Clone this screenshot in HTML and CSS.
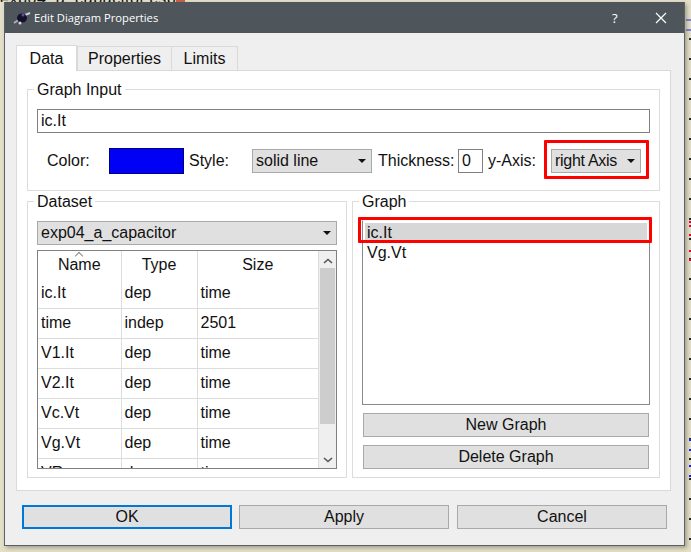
FILE: index.html
```html
<!DOCTYPE html>
<html lang="en">
<head>
	<meta charset="UTF-8">
	<title>Edit Diagram Properties</title>
	<link rel="stylesheet" href="styles.css">
</head>
<body>
	<div class="behind-title">exp04_a_capacitor.csp</div>
	<div class="behind-icon"></div>
	<svg class="behind-marks" width="6" height="552" viewBox="0 0 6 552">
		<path d="M1 20h5M1 30h5" stroke="#1f1fe0" fill="none"/>
		<path d="M4 222h2M4 226h2M4 235h2M4 251h2M4 260h2" stroke="#e8003c" stroke-width="2" fill="none"/>
		<path d="M4 440h2M4 450h2M4 466h2M4 476h2" stroke="#1f1fe0" stroke-width="2" fill="none"/>
	</svg>

	<div class="window">
		<div class="titlebar">
			<svg class="app-icon" width="18" height="18" viewBox="0 0 18 18">
				<path d="M1 14L7 10" stroke="#aab0b8" stroke-width="2"/>
				<path d="M12 6L17 4" stroke="#c8ccd0" stroke-width="2"/>
				<ellipse cx="9" cy="9" rx="5" ry="4.5" fill="#15102e"/>
				<circle cx="10" cy="6" r="1.5" fill="#6a4a9a"/>
				<circle cx="7" cy="14" r="1.5" fill="#d8d8e0"/>
			</svg>
			<span class="title">Edit Diagram Properties</span>
			<span class="help">?</span>
			<svg class="close" width="12" height="12" viewBox="0 0 12 12">
				<path d="M1 1L11 11M11 1L1 11" stroke="#fff" stroke-width="1.2" fill="none"/>
			</svg>
		</div>

		<div class="content">
			<div class="tabs">
				<div class="tab tab-active">Data</div>
				<div class="tab tab-props">Properties</div>
				<div class="tab tab-limits">Limits</div>
			</div>

			<div class="pane">
				<fieldset class="group group-input">
					<legend>Graph Input</legend>
					<div class="field">ic.It</div>
					<div class="style-row">
						<span class="lbl-color">Color:</span>
						<span class="swatch"></span>
						<span class="lbl-style">Style:</span>
						<div class="combo combo-style">solid line<i class="arrow"></i></div>
						<span class="lbl-thick">Thickness:</span>
						<div class="spin">0</div>
						<span class="lbl-axis">y-Axis:</span>
						<div class="combo combo-axis">right Axis<i class="arrow"></i></div>
					</div>
				</fieldset>

				<div class="columns">
					<fieldset class="group group-dataset">
						<legend>Dataset</legend>
						<div class="combo combo-dataset">exp04_a_capacitor<i class="arrow"></i></div>
						<div class="table-box">
							<div class="table-clip">
								<table>
									<thead>
										<tr><th class="col-name">Name</th><th class="col-type">Type</th><th>Size</th></tr>
									</thead>
									<tbody>
										<tr><td>ic.It</td><td>dep</td><td>time</td></tr>
										<tr><td>time</td><td>indep</td><td>2501</td></tr>
										<tr><td>V1.It</td><td>dep</td><td>time</td></tr>
										<tr><td>V2.It</td><td>dep</td><td>time</td></tr>
										<tr><td>Vc.Vt</td><td>dep</td><td>time</td></tr>
										<tr><td>Vg.Vt</td><td>dep</td><td>time</td></tr>
										<tr><td>VR.</td><td>dep</td><td>time</td></tr>
									</tbody>
								</table>
							</div>
							<div class="scrollbar">
								<svg width="10" height="6" viewBox="0 0 10 6"><path d="M1 5L5 1.5L9 5" stroke="#555" stroke-width="1.6" fill="none"/></svg>
								<div class="thumb"></div>
								<svg width="10" height="6" viewBox="0 0 10 6"><path d="M1 1L5 4.5L9 1" stroke="#555" stroke-width="1.6" fill="none"/></svg>
							</div>
						</div>
					</fieldset>

					<fieldset class="group group-graph">
						<legend>Graph</legend>
						<div class="list">
							<div class="list-item list-item-on">ic.It</div>
							<div class="list-item">Vg.Vt</div>
						</div>
						<div class="btn btn-graph">New Graph</div>
						<div class="btn btn-graph">Delete Graph</div>
					</fieldset>
				</div>
			</div>

			<div class="buttons">
				<div class="btn btn-main btn-default">OK</div>
				<div class="btn btn-main">Apply</div>
				<div class="btn btn-main btn-last">Cancel</div>
			</div>
		</div>

		<div class="mark mark-axis"></div>
		<div class="mark mark-list"></div>
	</div>
</body>
</html>
```

FILE: styles.css
```css
*{
	padding: 0;
	margin: 0;
	box-sizing: border-box;
}
body{
	width: 691px;
	height: 552px;
	overflow: hidden;
	position: relative;
	font-family: "Liberation Sans", Arial, sans-serif;
	font-size: 16px;
	color: #111;
	background-color: #e3dfc9;
	background-image: repeating-linear-gradient(to bottom, #222 0, #222 2px, transparent 2px, transparent 20px);
	background-size: 2px 100%;
	background-position: 689px 38px;
	background-repeat: no-repeat;
}
.behind-title{
	position: absolute;
	left: 0;
	top: -9px;
	width: 180px;
	height: 11px;
	overflow: hidden;
	font-size: 16px;
	letter-spacing: .6px;
	line-height: 16px;
	white-space: nowrap;
}
.behind-icon{
	position: absolute;
	left: 176px;
	top: 0;
	width: 9px;
	height: 3px;
	background: #c9604a;
}
.behind-marks{
	position: absolute;
	left: 685px;
	top: 0;
}
.window{
	position: absolute;
	left: 4px;
	top: 2px;
	width: 681px;
	height: 544px;
	background: #efefef;
	border: 1px solid #596066;
	border-top: 0;
	box-shadow: 2px 2px 4px rgba(90, 85, 60, .45);
}
.titlebar{
	height: 31px;
	background: #4e565c;
	color: #fff;
	display: flex;
	align-items: center;
	padding-left: 8px;
	font-family: "Open Sans", sans-serif;
	font-size: 11.2px;
}
.app-icon{
	margin-right: 3px;
}
.title{
	width: 540px;
	white-space: nowrap;
}
.help{
	width: 45px;
	font-size: 13px;
	margin-left: 38px;
}
.close{
	margin-left: -2px;
}
.content{
	padding: 11px 14px 0 11px;
}
.tabs{
	display: flex;
	align-items: flex-end;
	height: 26px;
}
.tab{
	height: 24px;
	line-height: 24px;
	text-align: center;
	background: #efefef;
	border: 1px solid #d9d9d9;
	border-bottom: 0;
}
.tab-active{
	width: 61px;
	height: 26px;
	line-height: 26px;
	background: #fff;
	position: relative;
	z-index: 1;
	margin-bottom: -1px;
}
.tab-props{
	width: 95px;
}
.tab-limits{
	width: 67px;
	margin-left: -1px;
}
.pane{
	width: 655px;
	height: 421px;
	background: #fff;
	border: 1px solid #d9d9d9;
	padding: 0 10px;
}
.group{
	border: 1px solid #dcdcdc;
	position: relative;
}
.group legend{
	margin-left: -3px;
	padding: 0 3px;
	height: 19px;
	line-height: 19px;
}
.group-input{
	height: 111px;
	margin-top: 9px;
	padding: 0 9px;
}
.field{
	width: 613px;
	height: 24px;
	margin-top: 10px;
	border: 1px solid #808080;
	line-height: 22px;
	padding-left: 3px;
}
.style-row{
	display: flex;
	align-items: center;
	height: 26px;
	margin-top: 15px;
}
.lbl-color{
	margin-left: 10px;
	width: 62px;
}
.swatch{
	width: 75px;
	height: 26px;
	background: #0000f5;
	border: 1px solid #000080;
}
.lbl-style{
	margin-left: 5px;
	width: 63px;
}
.lbl-thick{
	margin-left: 6px;
	width: 80px;
}
.lbl-axis{
	margin-left: 5px;
	width: 63px;
}
.combo{
	position: relative;
	height: 24px;
	line-height: 22px;
	background: #e0e0e0;
	border: 1px solid #a9a9a9;
	padding-left: 3px;
	white-space: nowrap;
}
.arrow{
	position: absolute;
	right: 5px;
	top: 9px;
	border: 4px solid transparent;
	border-top: 4px solid #111;
	border-bottom: 0;
}
.combo-style{
	width: 120px;
}
.combo-axis{
	width: 90px;
	letter-spacing: -.3px;
}
.spin{
	width: 25px;
	height: 24px;
	border: 1px solid #808080;
	line-height: 22px;
	padding-left: 3px;
}
.columns{
	display: flex;
	gap: 5px;
	margin-top: 1px;
}
.group-dataset{
	width: 320px;
	height: 286px;
	padding: 0 9px;
}
.group-graph{
	width: 308px;
	height: 286px;
	padding: 0 9px;
}
.combo-dataset{
	width: 300px;
	margin-top: 10px;
}
.table-box{
	width: 300px;
	height: 219px;
	margin-top: 5px;
	border: 1px solid #808080;
	display: flex;
}
.table-clip{
	width: 281px;
	overflow: hidden;
}
table{
	width: 281px;
	table-layout: fixed;
	border-collapse: collapse;
}
th{
	height: 27px;
	font-weight: normal;
	text-align: center;
	border-right: 1px solid #dcdcdc;
	position: relative;
}
.col-name{
	width: 83px;
}
.col-type{
	width: 76px;
}
.col-name:before{
	content: "";
	position: absolute;
	left: 38px;
	top: 2px;
	width: 5px;
	height: 5px;
	border-top: 1px solid #888;
	border-left: 1px solid #888;
	transform: rotate(45deg);
}
td{
	height: 30px;
	padding-left: 3px;
	border-right: 1px solid #dcdcdc;
	border-bottom: 1px solid #dcdcdc;
}
.scrollbar{
	width: 17px;
	background: #efefef;
	display: flex;
	flex-direction: column;
	align-items: center;
	padding-top: 7px;
}
.thumb{
	width: 15px;
	height: 156px;
	margin-top: 4px;
	margin-bottom: 33px;
	background: #cdcdcd;
}
.list{
	width: 288px;
	height: 185px;
	margin-top: 9px;
	padding: 1px 1px;
	border: 1px solid #868a8e;
	border-top-color: #fff;
}
.list-item{
	height: 20px;
	line-height: 20px;
	padding-left: 3px;
}
.list-item-on{
	height: 21px;
	background: #d7d7d7;
	border: 1px solid #fff;
	line-height: 19px;
	padding-left: 2px;
}
.btn{
	height: 24px;
	line-height: 22px;
	background: #e0e0e0;
	border: 1px solid #a9a9a9;
	text-align: center;
}
.btn-graph{
	width: 286px;
	margin: 8px 0 0 1px;
}
.buttons{
	display: flex;
	gap: 7px;
	margin: 14px 0 0 6px;
}
.btn-main{
	width: 210px;
}
.btn-last{
	margin-left: 1px;
}
.btn-default{
	border: 2px solid #0078d7;
	line-height: 20px;
}
.mark{
	position: absolute;
	border: 3px solid #fe0000;
	border-radius: 1px;
	pointer-events: none;
}
.mark-axis{
	left: 539px;
	top: 138px;
	width: 105px;
	height: 39px;
}
.mark-list{
	left: 353px;
	top: 215px;
	width: 294px;
	height: 26px;
}
```
